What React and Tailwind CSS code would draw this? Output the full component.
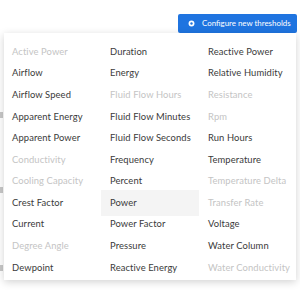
import React from "react";

const cols = [
  [
    ["Active Power", true],
    ["Airflow"],
    ["Airflow Speed"],
    ["Apparent Energy"],
    ["Apparent Power"],
    ["Conductivity", true],
    ["Cooling Capacity", true],
    ["Crest Factor"],
    ["Current"],
    ["Degree Angle", true],
    ["Dewpoint"],
  ],
  [
    ["Duration"],
    ["Energy"],
    ["Fluid Flow Hours", true],
    ["Fluid Flow Minutes"],
    ["Fluid Flow Seconds"],
    ["Frequency"],
    ["Percent"],
    ["Power", false, true],
    ["Power Factor"],
    ["Pressure"],
    ["Reactive Energy"],
  ],
  [
    ["Reactive Power"],
    ["Relative Humidity"],
    ["Resistance", true],
    ["Rpm", true],
    ["Run Hours"],
    ["Temperature"],
    ["Temperature Delta", true],
    ["Transfer Rate", true],
    ["Voltage"],
    ["Water Column"],
    ["Water Conductivity", true],
  ],
];

const pads = ["pl-[8px]", "pl-[9px]", "pl-[9px]"];
const widths = ["w-[97px]", "w-[98px]", "w-[97px]"];

export default function App() {
  return (
    <div className="relative w-[300px] h-[300px] bg-white overflow-hidden font-['Lato',_sans-serif]">
      <div className="absolute left-0 top-[112px] w-[3px] h-[6px] bg-[#c8c8c8]" />
      <div className="absolute left-0 top-[187px] w-[3px] h-[6px] bg-[#c8c8c8]" />
      <div className="absolute left-0 top-[265px] w-[3px] h-[6px] bg-[#c8c8c8]" />
      <div className="flex justify-end pt-[14px] pr-[3px]">
        <button className="flex items-center h-[19px] w-[119px] bg-[#1f74e0] rounded-[2px] pl-[10px] text-white text-[7.9px] leading-none">
          <svg width="7" height="7" viewBox="0 0 10 10" className="mr-[7px]">
            <circle cx="5" cy="5" r="4.2" fill="white" />
            <circle cx="5" cy="5" r="1.7" fill="#1f74e0" />
          </svg>
          <span>Configure new thresholds</span>
        </button>
      </div>
      <div className="relative z-10 ml-[4px] w-[292px] h-[247px] bg-white shadow-[0_2px_8px_rgba(0,0,0,0.18)] flex pt-[8px]">
        {cols.map((col, ci) => (
          <div key={ci} className={`flex flex-col ${widths[ci]}`}>
            {col.map(([label, disabled, active]) => (
              <div
                key={label}
                className={`relative flex items-center h-[21.6px] ${pads[ci]} text-[9.4px] tracking-[0.1px] whitespace-nowrap ${
                  disabled ? "text-[#c4c4c4]" : "text-[#3a3a3a]"
                }`}
              >
                {active && <div className="absolute inset-x-0 -top-[2px] -bottom-[2px] bg-[#f4f4f4]" />}
                <span className="relative">{label}</span>
              </div>
            ))}
          </div>
        ))}
      </div>
    </div>
  );
}
